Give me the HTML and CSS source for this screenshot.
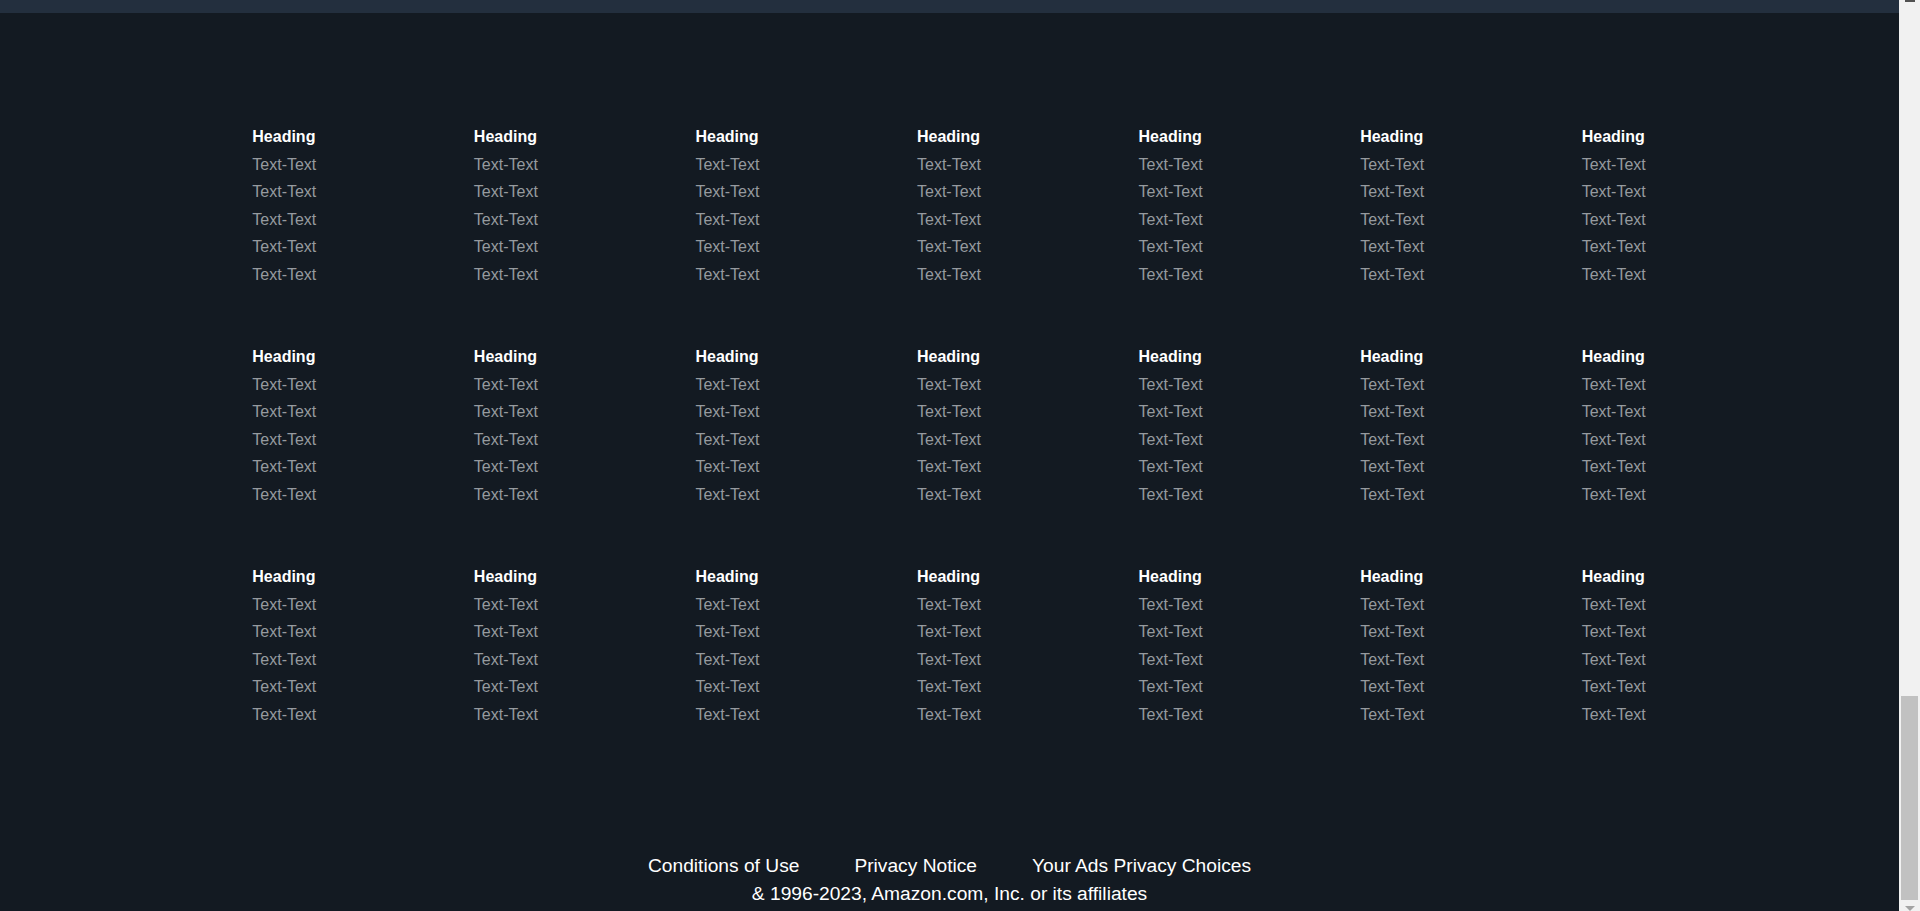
FILE: index.html
```html
<!DOCTYPE html>
<html lang="en">
<head>
<meta charset="utf-8">
<title>Footer</title>
<link rel="stylesheet" href="styles.css">
</head>
<body>
<div class="page">
  <div class="topbar"></div>
  <section class="link-grid">
    <div class="col"><h4 class="col-heading">Heading</h4><a class="col-link">Text-Text</a><a class="col-link">Text-Text</a><a class="col-link">Text-Text</a><a class="col-link">Text-Text</a><a class="col-link">Text-Text</a></div>
    <div class="col"><h4 class="col-heading">Heading</h4><a class="col-link">Text-Text</a><a class="col-link">Text-Text</a><a class="col-link">Text-Text</a><a class="col-link">Text-Text</a><a class="col-link">Text-Text</a></div>
    <div class="col"><h4 class="col-heading">Heading</h4><a class="col-link">Text-Text</a><a class="col-link">Text-Text</a><a class="col-link">Text-Text</a><a class="col-link">Text-Text</a><a class="col-link">Text-Text</a></div>
    <div class="col"><h4 class="col-heading">Heading</h4><a class="col-link">Text-Text</a><a class="col-link">Text-Text</a><a class="col-link">Text-Text</a><a class="col-link">Text-Text</a><a class="col-link">Text-Text</a></div>
    <div class="col"><h4 class="col-heading">Heading</h4><a class="col-link">Text-Text</a><a class="col-link">Text-Text</a><a class="col-link">Text-Text</a><a class="col-link">Text-Text</a><a class="col-link">Text-Text</a></div>
    <div class="col"><h4 class="col-heading">Heading</h4><a class="col-link">Text-Text</a><a class="col-link">Text-Text</a><a class="col-link">Text-Text</a><a class="col-link">Text-Text</a><a class="col-link">Text-Text</a></div>
    <div class="col"><h4 class="col-heading">Heading</h4><a class="col-link">Text-Text</a><a class="col-link">Text-Text</a><a class="col-link">Text-Text</a><a class="col-link">Text-Text</a><a class="col-link">Text-Text</a></div>

    <div class="col"><h4 class="col-heading">Heading</h4><a class="col-link">Text-Text</a><a class="col-link">Text-Text</a><a class="col-link">Text-Text</a><a class="col-link">Text-Text</a><a class="col-link">Text-Text</a></div>
    <div class="col"><h4 class="col-heading">Heading</h4><a class="col-link">Text-Text</a><a class="col-link">Text-Text</a><a class="col-link">Text-Text</a><a class="col-link">Text-Text</a><a class="col-link">Text-Text</a></div>
    <div class="col"><h4 class="col-heading">Heading</h4><a class="col-link">Text-Text</a><a class="col-link">Text-Text</a><a class="col-link">Text-Text</a><a class="col-link">Text-Text</a><a class="col-link">Text-Text</a></div>
    <div class="col"><h4 class="col-heading">Heading</h4><a class="col-link">Text-Text</a><a class="col-link">Text-Text</a><a class="col-link">Text-Text</a><a class="col-link">Text-Text</a><a class="col-link">Text-Text</a></div>
    <div class="col"><h4 class="col-heading">Heading</h4><a class="col-link">Text-Text</a><a class="col-link">Text-Text</a><a class="col-link">Text-Text</a><a class="col-link">Text-Text</a><a class="col-link">Text-Text</a></div>
    <div class="col"><h4 class="col-heading">Heading</h4><a class="col-link">Text-Text</a><a class="col-link">Text-Text</a><a class="col-link">Text-Text</a><a class="col-link">Text-Text</a><a class="col-link">Text-Text</a></div>
    <div class="col"><h4 class="col-heading">Heading</h4><a class="col-link">Text-Text</a><a class="col-link">Text-Text</a><a class="col-link">Text-Text</a><a class="col-link">Text-Text</a><a class="col-link">Text-Text</a></div>

    <div class="col"><h4 class="col-heading">Heading</h4><a class="col-link">Text-Text</a><a class="col-link">Text-Text</a><a class="col-link">Text-Text</a><a class="col-link">Text-Text</a><a class="col-link">Text-Text</a></div>
    <div class="col"><h4 class="col-heading">Heading</h4><a class="col-link">Text-Text</a><a class="col-link">Text-Text</a><a class="col-link">Text-Text</a><a class="col-link">Text-Text</a><a class="col-link">Text-Text</a></div>
    <div class="col"><h4 class="col-heading">Heading</h4><a class="col-link">Text-Text</a><a class="col-link">Text-Text</a><a class="col-link">Text-Text</a><a class="col-link">Text-Text</a><a class="col-link">Text-Text</a></div>
    <div class="col"><h4 class="col-heading">Heading</h4><a class="col-link">Text-Text</a><a class="col-link">Text-Text</a><a class="col-link">Text-Text</a><a class="col-link">Text-Text</a><a class="col-link">Text-Text</a></div>
    <div class="col"><h4 class="col-heading">Heading</h4><a class="col-link">Text-Text</a><a class="col-link">Text-Text</a><a class="col-link">Text-Text</a><a class="col-link">Text-Text</a><a class="col-link">Text-Text</a></div>
    <div class="col"><h4 class="col-heading">Heading</h4><a class="col-link">Text-Text</a><a class="col-link">Text-Text</a><a class="col-link">Text-Text</a><a class="col-link">Text-Text</a><a class="col-link">Text-Text</a></div>
    <div class="col"><h4 class="col-heading">Heading</h4><a class="col-link">Text-Text</a><a class="col-link">Text-Text</a><a class="col-link">Text-Text</a><a class="col-link">Text-Text</a><a class="col-link">Text-Text</a></div>
  </section>
  <footer class="legal">
    <nav class="legal-links">
      <a class="legal-link">Conditions of Use</a>
      <a class="legal-link">Privacy Notice</a>
      <a class="legal-link">Your Ads Privacy Choices</a>
    </nav>
    <p class="copyright">&amp; 1996-2023, Amazon.com, Inc. or its affiliates</p>
  </footer>
</div>
<div class="scrollbar" aria-hidden="true">
  <div class="scrollbar-up"></div>
  <div class="scrollbar-thumb"></div>
  <div class="scrollbar-down"></div>
</div>
</body>
</html>
```
FILE: styles.css
```css
html {
  background: #131a22;
}

body {
  margin: 0;
  height: 911px;
  overflow: hidden;
  display: flex;
  background: #131a22;
  font-family: "Liberation Sans", Arial, sans-serif;
  color: #ffffff;
}

.page {
  flex: 1;
  min-width: 0;
}

.topbar {
  height: 13px;
  background: #232f3e;
}

.link-grid {
  width: 1551px;
  margin: 0 auto;
  padding-top: 110px;
  display: grid;
  grid-template-columns: repeat(7, 1fr);
  row-gap: 55px;
  justify-items: center;
}

.col {
  width: 65px;
  display: flex;
  flex-direction: column;
  align-items: flex-start;
  white-space: nowrap;
}

.col-heading {
  margin: 0;
  font-size: 16px;
  font-weight: 700;
  line-height: 27.5px;
  color: #ffffff;
}

.col-link {
  font-size: 16px;
  line-height: 27.5px;
  color: #969a9f;
}

.legal {
  margin-top: 124px;
  display: flex;
  flex-direction: column;
  align-items: center;
  font-size: 19.2px;
  line-height: 28px;
}

.legal-links {
  display: flex;
  gap: 55px;
}

.legal-link {
  color: #ffffff;
}

.copyright {
  margin: 0;
  color: #ffffff;
}

/* browser scrollbar, scrolled to the bottom */
.scrollbar {
  width: 21px;
  flex: none;
  display: flex;
  flex-direction: column;
  align-items: center;
  background: #f1f1f1;
}

.scrollbar-up {
  width: 10px;
  height: 2px;
  background: #505050;
  margin-bottom: 694px;
}

.scrollbar-thumb {
  width: 17px;
  height: 204px;
  background: #c1c1c1;
}

.scrollbar-down {
  margin-top: 6px;
  width: 0;
  height: 0;
  border-left: 5px solid transparent;
  border-right: 5px solid transparent;
  border-top: 5px solid #a3a3a3;
}
```
